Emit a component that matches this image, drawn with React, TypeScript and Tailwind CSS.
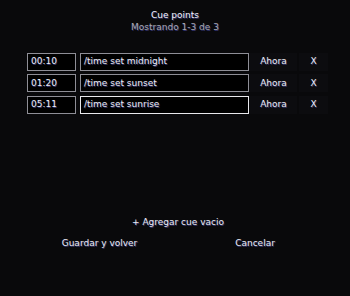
const cues = [
  { time: "00:10", cmd: "/time set midnight", focused: false },
  { time: "01:20", cmd: "/time set sunset", focused: false },
  { time: "05:11", cmd: "/time set sunrise", focused: true },
];

const font = "font-['DejaVu_Sans',sans-serif] text-[9px] leading-[9px]";
const shadow = "[text-shadow:0.8px_0.8px_0_#34346c]";

export default function App() {
  return (
    <div className={`w-[350px] h-[296px] bg-[#09090b] flex flex-col ${font} ${shadow} text-[#ececf6]`}>
      {/* Header */}
      <div className="pt-[11px] flex flex-col items-center">
        <div className="text-[#f4f4ff]">Cue points</div>
        <div className="mt-[2.5px] text-[#a8a8b2]">Mostrando 1-3 de 3</div>
      </div>

      {/* Cue rows */}
      <div className="mt-[21px] ml-[27px] flex flex-col gap-[3.5px]">
        {cues.map((c) => (
          <div key={c.time} className="flex items-center h-[18px]">
            <div className="w-[49px] h-full border border-[#8e8e96] bg-black flex items-center pl-[3px]">
              {c.time}
            </div>
            <div
              className={`ml-[4px] w-[169px] h-full border bg-black flex items-center pl-[3px] ${
                c.focused ? "border-[#e8e8ec]" : "border-[#8e8e96]"
              }`}
            >
              {c.cmd}
            </div>
            <div className="ml-[1px] w-[47px] h-full bg-[#0c0c0f] flex items-center justify-center">
              Ahora
            </div>
            <div className="ml-[2px] w-[29px] h-full bg-[#0c0c0f] flex items-center justify-center">
              X
            </div>
          </div>
        ))}
      </div>

      {/* Add button */}
      <div className="mt-[100px] h-[18px] flex items-center justify-center pl-[6px]">
        + Agregar cue vacio
      </div>

      {/* Footer buttons */}
      <div className="mt-[3px] flex gap-[6px] ml-[25px]">
        <div className="w-[149px] h-[18px] flex items-center justify-center">Guardar y volver</div>
        <div className="w-[150px] h-[18px] flex items-center justify-center">Cancelar</div>
      </div>
    </div>
  );
}
